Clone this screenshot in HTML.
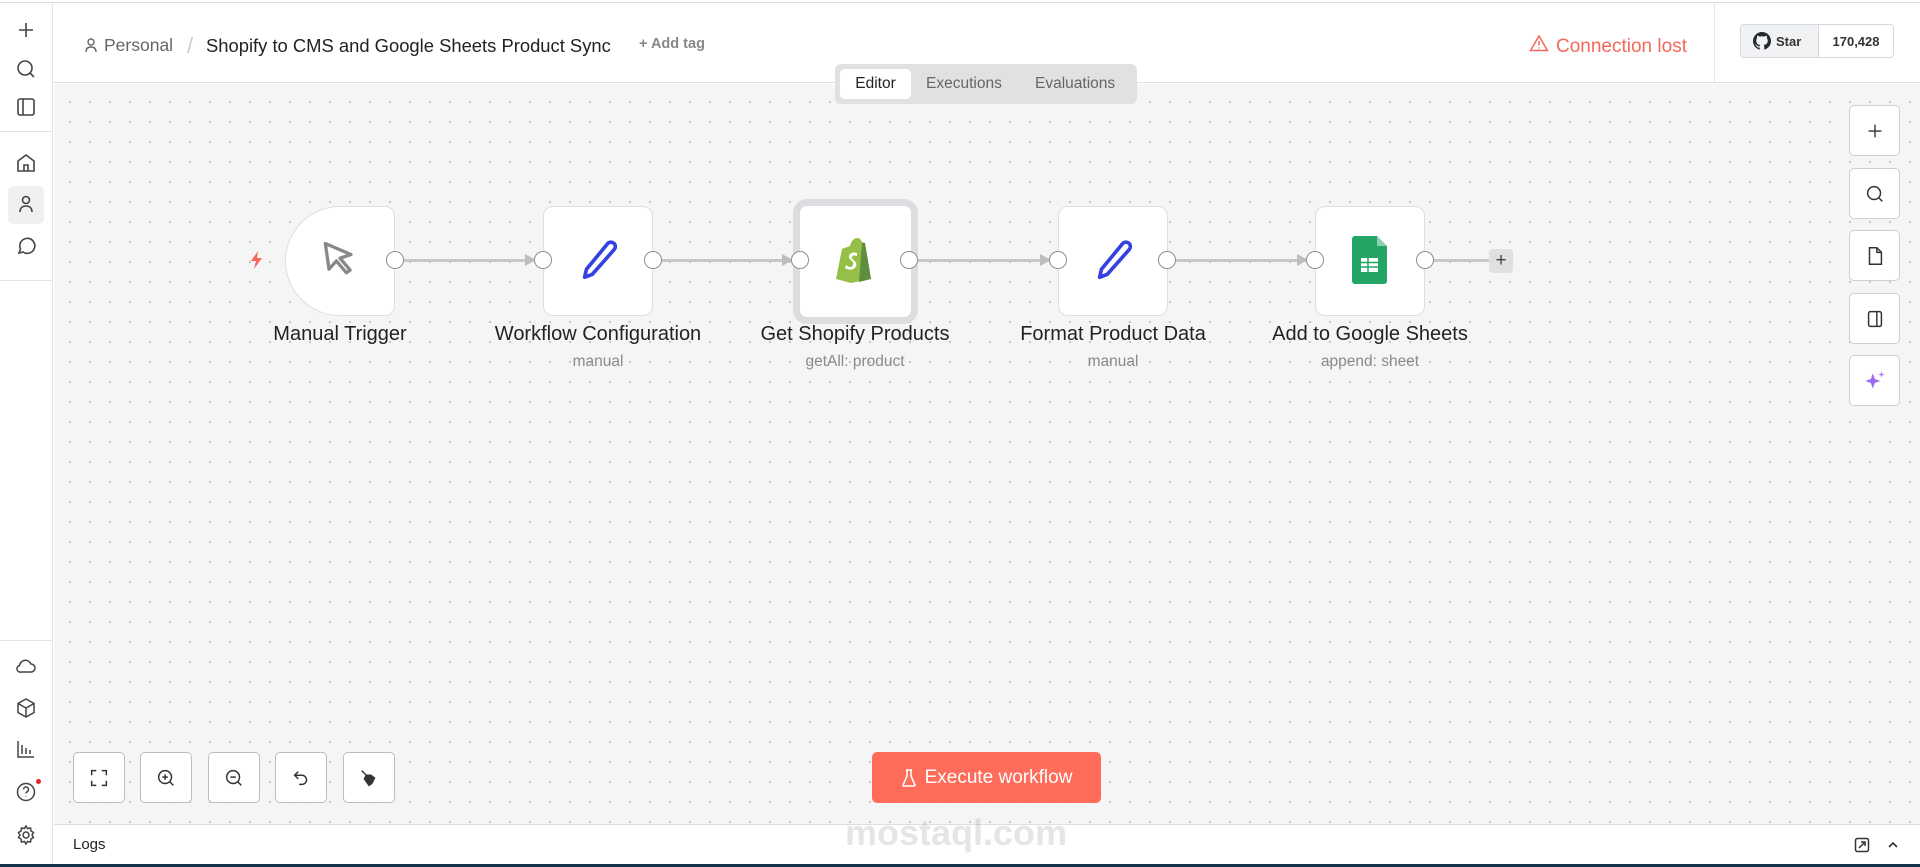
<!DOCTYPE html>
<html><head><meta charset="utf-8"><style>
*{box-sizing:border-box;margin:0;padding:0}
body{width:1920px;height:867px;overflow:hidden;font-family:"Liberation Sans",sans-serif;background:#fff;position:relative;color:#222}
.abs{position:absolute}
#top{left:0;top:0;width:1920px;height:3px;background:#fff;border-bottom:1px solid #ddd}
#side{left:0;top:3px;width:53px;height:861px;border-right:1px solid #e4e4e4;background:#fff}
.sic{position:absolute;left:14px;width:24px;height:24px}
.sep{position:absolute;left:0;width:53px;height:1px;background:#e2e2e2}
#hdr{left:53px;top:3px;width:1867px;height:80px;background:#fff;border-bottom:1px solid #e2e2e2}
#canvas{left:54px;top:84px;width:1866px;height:740px;background-color:#f5f5f5;background-image:radial-gradient(circle,#c4c4c4 1px,transparent 1.3px);background-size:20px 20px;background-position:6px 8px}
#logs{left:54px;top:824px;width:1866px;height:40px;background:#fff;border-top:1px solid #ddd}
#bot{left:0;top:864px;width:1920px;height:3px;background:#14324a}
.node{position:absolute;top:206px;width:110px;height:110px;background:#fff;border:1px solid #dedede;border-radius:10px}
.h{position:absolute;top:251px;width:18px;height:18px;border-radius:50%;background:#fff;border:1.5px solid #8f8f8f}
.edge{position:absolute;top:259px;height:3px;background:#c8c8c8}
.arr{position:absolute;top:254px;width:0;height:0;border-top:6px solid transparent;border-bottom:6px solid transparent;border-left:11px solid #bdbdbd}
.lbl{position:absolute;top:323px;width:300px;text-align:center;font-size:20px;color:#222}
.sub{position:absolute;top:353px;width:300px;text-align:center;font-size:15.5px;color:#8a8a8a}
.rb{position:absolute;left:1849px;width:51px;height:51px;background:#fff;border:1px solid #cfcfcf;border-radius:5px;display:flex;align-items:center;justify-content:center}
.lb{position:absolute;top:752px;width:52px;height:51px;background:#fff;border:1px solid #bdbdbd;border-radius:5px;display:flex;align-items:center;justify-content:center}
svg{display:block}
</style></head><body>
<div id="top" class="abs"></div>
<div id="side" class="abs">
 <svg class="sic" style="top:15px" viewBox="0 0 24 24" fill="none" stroke="#444" stroke-width="1.6"><path d="M12 5v14M5 12h14"/></svg>
 <svg class="sic" style="top:54px" viewBox="0 0 24 24" fill="none" stroke="#444" stroke-width="1.6"><circle cx="11" cy="11" r="7"/><path d="M16 16l4 4"/></svg>
 <svg class="sic" style="top:92px" viewBox="0 0 24 24" fill="none" stroke="#444" stroke-width="1.6"><rect x="4" y="4" width="16" height="16" rx="2"/><path d="M9 4v16"/></svg>
 <div class="sep" style="top:128px"></div>
 <svg class="sic" style="top:148px" viewBox="0 0 24 24" fill="none" stroke="#444" stroke-width="1.6"><path d="M4 10l8-6 8 6v10H4z"/><path d="M10 20v-6h4v6"/></svg>
 <div class="abs" style="left:8px;top:183px;width:36px;height:38px;background:#f0f0f0;border-radius:5px"></div>
 <svg class="sic" style="top:189px" viewBox="0 0 24 24" fill="none" stroke="#444" stroke-width="1.6"><circle cx="12" cy="8" r="3.5"/><path d="M6 20c0-4 2.5-6 6-6s6 2 6 6"/></svg>
 <svg class="sic" style="top:231px" viewBox="0 0 24 24" fill="none" stroke="#444" stroke-width="1.6"><path d="M5 19l1.5-4A7.5 7.5 0 1 1 9 18z"/></svg>
 <div class="sep" style="top:277px"></div>
 <div class="sep" style="top:637px"></div>
 <svg class="sic" style="top:651px" viewBox="0 0 24 24" fill="none" stroke="#444" stroke-width="1.5"><path d="M7 18h10a4 4 0 0 0 0-8 6 6 0 0 0-11.5 1.5A3.3 3.3 0 0 0 7 18z"/></svg>
 <svg class="sic" style="top:693px" viewBox="0 0 24 24" fill="none" stroke="#444" stroke-width="1.5"><path d="M12 3l8 4.5v9L12 21l-8-4.5v-9z"/><path d="M4 7.5l8 4.5 8-4.5M12 12v9"/></svg>
 <svg class="sic" style="top:734px" viewBox="0 0 24 24" fill="none" stroke="#444" stroke-width="1.5"><path d="M4 4v16h16M8 17V8M12 17v-6M16 17v-4"/></svg>
 <svg class="sic" style="top:777px" viewBox="0 0 24 24" fill="none" stroke="#444" stroke-width="1.5"><circle cx="12" cy="12" r="8.5"/><path d="M9.5 9.5a2.5 2.5 0 1 1 3.5 2.3c-.7.4-1 .9-1 1.7M12 16.5v.5"/></svg>
 <div class="abs" style="left:36px;top:776px;width:5px;height:5px;border-radius:50%;background:#e5252a"></div>
 <svg class="sic" style="top:820px" viewBox="0 0 24 24" fill="none" stroke="#444" stroke-width="1.5"><circle cx="12" cy="12" r="3"/><path d="M12 3l1.5 2.5 3-.5.5 3 2.5 1.5-1.5 2.5 1.5 2.5-2.5 1.5-.5 3-3-.5L12 21l-1.5-2.5-3 .5-.5-3L4.5 14.5 6 12 4.5 9.5 7 8l.5-3 3 .5z"/></svg>
</div>
<div id="hdr" class="abs">
 <svg class="abs" style="left:31px;top:34px" width="14" height="16" viewBox="0 0 14 16" fill="none" stroke="#666" stroke-width="1.4"><circle cx="7" cy="5" r="3"/><path d="M2 15c0-3.5 2-5 5-5s5 1.5 5 5"/></svg>
 <div class="abs" style="left:51px;top:32px;font-size:17.5px;color:#666">Personal</div>
 <div class="abs" style="left:134px;top:30px;font-size:22px;color:#ccc">/</div>
 <div class="abs" style="left:153px;top:32px;font-size:18.4px;color:#222">Shopify to CMS and Google Sheets Product Sync</div>
 <div class="abs" style="left:586px;top:33px;font-size:14.5px;color:#888;font-weight:bold">+ Add tag</div>
 <svg class="abs" style="left:1476px;top:31px" width="20" height="18" viewBox="0 0 20 18" fill="none" stroke="#f4685b" stroke-width="1.5"><path d="M10 2L1.5 16.5h17z"/><path d="M10 7v4.5M10 13.5v1"/></svg>
 <div class="abs" style="left:1503px;top:33px;font-size:19px;color:#f4685b">Connection lost</div>
 <div class="abs" style="left:1661px;top:0;width:1px;height:80px;background:#e6e6e6"></div>
 <div class="abs" style="left:1687px;top:21px;width:154px;height:34px;border:1px solid #d5d8dc;border-radius:4px;overflow:hidden;display:flex">
  <div style="width:78px;background:#f0f2f4;border-right:1px solid #d5d8dc;display:flex;align-items:center;padding-left:12px;gap:5px;font-size:13px;font-weight:bold;color:#333">
   <svg width="18" height="18" viewBox="0 0 16 16"><path fill="#24292f" d="M8 0C3.6 0 0 3.6 0 8c0 3.5 2.3 6.5 5.5 7.6.4.1.5-.2.5-.4v-1.4c-2.2.5-2.7-1-2.7-1-.4-.9-.9-1.2-.9-1.2-.7-.5.1-.5.1-.5.8.1 1.2.8 1.2.8.7 1.3 1.9.9 2.3.7.1-.5.3-.9.5-1.1-1.800-.2-3.6-.9-3.6-4 0-.9.3-1.6.8-2.1-.1-.2-.4-1 .1-2.1 0 0 .7-.2 2.2.8.6-.2 1.3-.3 2-.3s1.4.1 2 .3c1.5-1 2.2-.8 2.2-.8.4 1.1.2 1.9.1 2.1.5.6.8 1.3.8 2.1 0 3.1-1.9 3.7-3.6 3.9.3.3.5.8.5 1.5v2.2c0 .2.1.5.6.4C13.7 14.5 16 11.5 16 8c0-4.4-3.6-8-8-8z"/></svg>Star</div>
  <div style="flex:1;display:flex;align-items:center;justify-content:center;font-size:13px;font-weight:bold;color:#333">170,428</div>
 </div>
</div>
<div id="canvas" class="abs"></div>
<!-- tabs -->
<div class="abs" style="left:835px;top:64px;width:302px;height:40px;background:#e1e1e1;border-radius:6px"></div>
<div class="abs" style="left:840px;top:69px;width:71px;height:30px;background:#fff;border-radius:5px;font-size:15.5px;color:#222;text-align:center;line-height:30px">Editor</div>
<div class="abs" style="left:926px;top:75px;font-size:15.5px;color:#666">Executions</div>
<div class="abs" style="left:1035px;top:75px;font-size:15.5px;color:#666">Evaluations</div>
<!-- edges -->
<div class="edge" style="left:404px;width:130px"></div><div class="arr" style="left:525px"></div>
<div class="edge" style="left:661px;width:130px"></div><div class="arr" style="left:782px"></div>
<div class="edge" style="left:918px;width:130px"></div><div class="arr" style="left:1040px"></div>
<div class="edge" style="left:1175px;width:131px"></div><div class="arr" style="left:1297px"></div>
<div class="edge" style="left:1433px;width:56px"></div>
<div class="abs" style="left:1489px;top:249px;width:24px;height:24px;background:#e0e0e0;border-radius:4px;text-align:center;line-height:23px;font-size:19px;color:#444">+</div>
<!-- nodes -->
<div class="node" style="left:285px;border-radius:55px 10px 10px 55px"></div>
<svg class="abs" style="left:318px;top:238px" width="44" height="44" viewBox="0 0 24 24" fill="none" stroke="#888" stroke-width="1.8" stroke-linejoin="round"><path d="M4 3l14 6-6 2 5.5 6.5-2 1.5-5.5-6.5L6 17z"/></svg>
<svg class="abs" style="left:248px;top:250px" width="18" height="20" viewBox="0 0 18 20"><path d="M10 1L3 11h5l-2 8 8-11H9z" fill="#f4685b"/></svg>
<div class="node" style="left:543px"></div>
<svg class="abs" style="left:575px;top:237px" width="46" height="46" viewBox="0 0 24 24" fill="none" stroke="#3642e0" stroke-width="1.9" stroke-linejoin="round"><path d="M17 3.5a2.3 2.3 0 0 1 3.5 3L9 19.5 5 21l1-4.2z"/></svg>
<div class="abs" style="left:793px;top:199px;width:125px;height:125px;border:7px solid #dcdce1;border-radius:14px;background:#fff"></div>
<svg class="abs" style="left:834px;top:237px" width="42" height="46" viewBox="0 0 42 46"><path d="M8 12l8-3c1-5 4-8 7-8s4 2 5 4l3 1 6 36-20 4L2 42z" fill="#95bf47"/><path d="M31 6l6 36-12 3 3-39z" fill="#5e8e3e"/><path d="M23 16c-2-1-7-1-8 3s6 5 4 9-6 1-7 0l-1 3c2 2 9 3 11-2s-5-6-4-9 4-1 5-1z" fill="#fff"/></svg>
<div class="node" style="left:1058px"></div>
<svg class="abs" style="left:1090px;top:237px" width="46" height="46" viewBox="0 0 24 24" fill="none" stroke="#3642e0" stroke-width="1.9" stroke-linejoin="round"><path d="M17 3.5a2.3 2.3 0 0 1 3.5 3L9 19.5 5 21l1-4.2z"/></svg>
<div class="node" style="left:1315px"></div>
<svg class="abs" style="left:1352px;top:236px" width="36" height="48" viewBox="0 0 36 48"><path d="M3 0h22l10 10v35a3 3 0 0 1-3 3H3a3 3 0 0 1-3-3V3a3 3 0 0 1 3-3z" fill="#23a566"/><path d="M25 0l10 10H25z" fill="#8ed1b1"/><rect x="9" y="22" width="17" height="14" fill="#fff"/><path d="M9 26.5h17M9 31h17M16 22v14" stroke="#23a566" stroke-width="1.5"/></svg>
<!-- handles -->
<div class="h" style="left:386px"></div>
<div class="h" style="left:534px"></div><div class="h" style="left:644px"></div>
<div class="h" style="left:791px"></div><div class="h" style="left:900px"></div>
<div class="h" style="left:1049px"></div><div class="h" style="left:1158px"></div>
<div class="h" style="left:1306px"></div><div class="h" style="left:1416px"></div>
<!-- labels -->
<div class="lbl" style="left:190px">Manual Trigger</div>
<div class="lbl" style="left:448px">Workflow Configuration</div><div class="sub" style="left:448px">manual</div>
<div class="lbl" style="left:705px">Get Shopify Products</div><div class="sub" style="left:705px">getAll: product</div>
<div class="lbl" style="left:963px">Format Product Data</div><div class="sub" style="left:963px">manual</div>
<div class="lbl" style="left:1220px">Add to Google Sheets</div><div class="sub" style="left:1220px">append: sheet</div>
<!-- right buttons -->
<div class="rb" style="top:105px"><svg width="22" height="22" viewBox="0 0 24 24" fill="none" stroke="#333" stroke-width="1.5"><path d="M12 5v14M5 12h14"/></svg></div>
<div class="rb" style="top:168px"><svg width="22" height="22" viewBox="0 0 24 24" fill="none" stroke="#333" stroke-width="1.6"><circle cx="11" cy="11" r="7"/><path d="M16 16l4 4"/></svg></div>
<div class="rb" style="top:230px"><svg width="22" height="22" viewBox="0 0 24 24" fill="none" stroke="#333" stroke-width="1.6"><path d="M6 3h8l5 5v13H6z"/><path d="M14 3v5h5"/></svg></div>
<div class="rb" style="top:293px"><svg width="22" height="22" viewBox="0 0 24 24" fill="none" stroke="#333" stroke-width="1.6"><rect x="5" y="4" width="14" height="16" rx="2"/><path d="M14 4v16"/></svg></div>
<div class="rb" style="top:355px"><svg width="26" height="26" viewBox="0 0 24 24"><path d="M10 5l1.8 5.2L17 12l-5.2 1.8L10 19l-1.8-5.2L3 12l5.2-1.8z" fill="#9b6cf0"/><path d="M18 3l.8 2.2L21 6l-2.2.8L18 9l-.8-2.2L15 6l2.2-.8z" fill="#b48cf5"/></svg></div>
<!-- left bottom buttons -->
<div class="lb" style="left:73px"><svg width="22" height="22" viewBox="0 0 24 24" fill="none" stroke="#333" stroke-width="1.6"><path d="M4 9V4h5M15 4h5v5M20 15v5h-5M9 20H4v-5"/></svg></div>
<div class="lb" style="left:140px"><svg width="22" height="22" viewBox="0 0 24 24" fill="none" stroke="#333" stroke-width="1.6"><circle cx="11" cy="11" r="7"/><path d="M16 16l4 4M11 8v6M8 11h6"/></svg></div>
<div class="lb" style="left:208px"><svg width="22" height="22" viewBox="0 0 24 24" fill="none" stroke="#333" stroke-width="1.6"><circle cx="11" cy="11" r="7"/><path d="M16 16l4 4M8 11h6"/></svg></div>
<div class="lb" style="left:275px"><svg width="22" height="22" viewBox="0 0 24 24" fill="none" stroke="#333" stroke-width="1.6"><path d="M9 5L5 9l4 4"/><path d="M5 9h8a5 5 0 0 1 0 10h-3"/></svg></div>
<div class="lb" style="left:343px"><svg width="22" height="22" viewBox="0 0 24 24"><path d="M4 4l6 6M9 9l-2 4 5 7 3-2 3-6-4-3z" fill="#333" stroke="#333" stroke-width="1.6"/></svg></div>
<!-- execute -->
<div class="abs" style="left:872px;top:752px;width:229px;height:51px;background:#ff6d5a;border-radius:5px;display:flex;align-items:center;justify-content:center;gap:8px;color:#fff;font-size:19px">
 <svg width="16" height="20" viewBox="0 0 16 20" fill="none" stroke="#fff" stroke-width="1.6"><path d="M5 2h6M6 2v6L2 17a1 1 0 0 0 1 1h10a1 1 0 0 0 1-1L10 8V2"/></svg>Execute workflow</div>
<div id="logs" class="abs"><div class="abs" style="left:19px;top:11px;font-size:15px;color:#222">Logs</div>
 <svg class="abs" style="left:1800px;top:12px" width="16" height="16" viewBox="0 0 16 16" fill="none" stroke="#333" stroke-width="1.5"><rect x="1.5" y="1.5" width="13" height="13" rx="2"/><path d="M5 11l6-6M7 5h4v4"/></svg>
 <svg class="abs" style="left:1832px;top:13px" width="14" height="14" viewBox="0 0 14 14" fill="none" stroke="#333" stroke-width="1.6"><path d="M3 9l4-4 4 4"/></svg>
</div>
<div class="abs" style="left:845px;top:812px;font-size:36px;font-weight:bold;color:rgba(150,150,150,0.25)">mostaql.com</div>
<div id="bot" class="abs"></div>
</body></html>
